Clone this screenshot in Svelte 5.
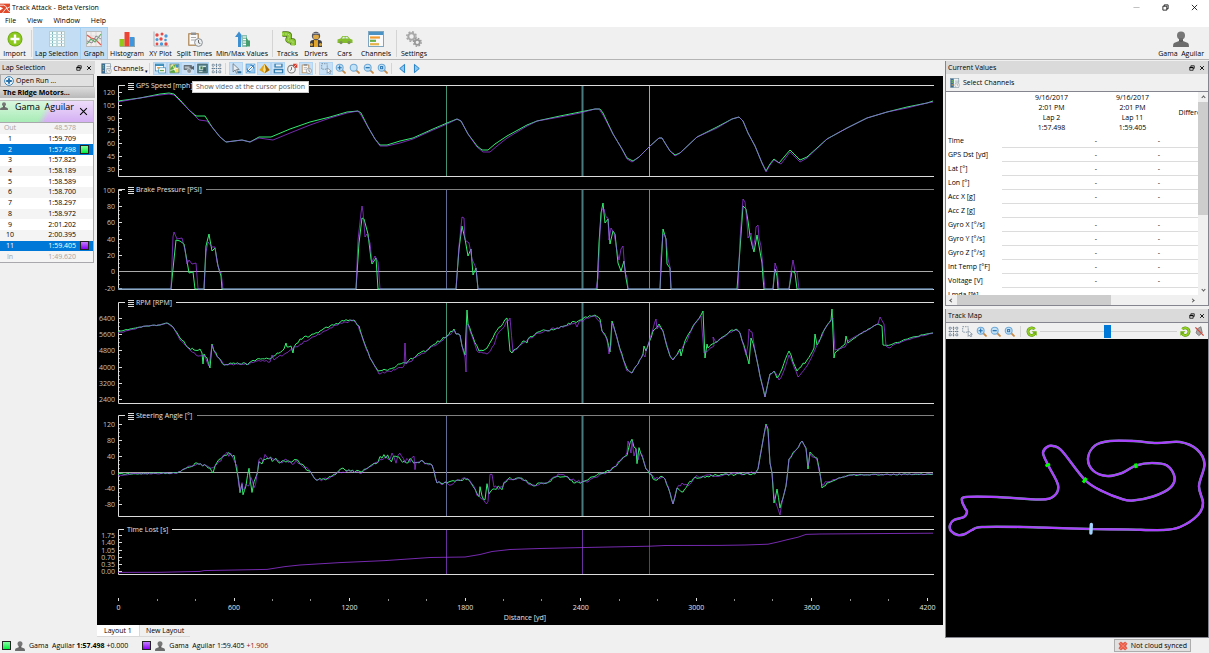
<script lang="ts">
	type Tool = { label: string; icon: string; width: number; active?: boolean; divider?: boolean };

	const tools: Tool[] = [
		{ label: 'Import', icon: 'import', width: 29 },
		{ label: 'Lap Selection', icon: 'laps', width: 48, active: true, divider: true },
		{ label: 'Graph', icon: 'graph', width: 27, active: true },
		{ label: 'Histogram', icon: 'histogram', width: 38 },
		{ label: 'XY Plot', icon: 'xy', width: 29 },
		{ label: 'Split Times', icon: 'clipboard', width: 39 },
		{ label: 'Min/Max Values', icon: 'minmax', width: 56 },
		{ label: 'Tracks', icon: 'tracks', width: 27, divider: true },
		{ label: 'Drivers', icon: 'driver', width: 30 },
		{ label: 'Cars', icon: 'car', width: 27 },
		{ label: 'Channels', icon: 'channels', width: 36 },
		{ label: 'Settings', icon: 'gears', width: 32, divider: true }
	];

	const plotTools = [
		[
			['Show table', 'window', true],
			['Show map', 'map', true],
			['Show video', 'video', true],
			['Show video at the cursor position', 'videoCursor', true],
			['Show grid', 'grid', false]
		],
		[
			['Cursor', 'pointer', true],
			['Zoom to fit', 'resize', false],
			['Show splits', 'pyramid', true],
			['Save view', 'save', true],
			['Time offset', 'stopwatch', false],
			['Notes', 'notes', true]
		],
		[
			['Select area', 'select', true],
			['Zoom in', 'zoomIn', false],
			['Zoom', 'zoom', false],
			['Zoom out', 'zoomOut', false],
			['Zoom all', 'zoomAll', false]
		],
		[
			['Previous lap', 'left', false],
			['Next lap', 'right', false]
		]
	] as [string, string, boolean][][];

	const mapTools = [
		['Grid', 'grid'],
		['Select area', 'select'],
		['Zoom in', 'zoomIn'],
		['Zoom out', 'zoomOut'],
		['Zoom all', 'zoomAll']
	];

	const laps = [
		['Out', '48.578'],
		['1', '1:59.709'],
		['2', '1:57.498'],
		['3', '1:57.825'],
		['4', '1:58.189'],
		['5', '1:58.589'],
		['6', '1:58.700'],
		['7', '1:58.297'],
		['8', '1:58.972'],
		['9', '2:01.202'],
		['10', '2:00.395'],
		['11', '1:59.405'],
		['In', '1:49.620']
	];

	let selected = $state(['2', '11']);
	let rotation = $state(49);

	const channels = [
		'Time', 'GPS Dst [yd]', 'Lat [°]', 'Lon [°]', 'Acc X [g]', 'Acc Z [g]', 'Gyro X [°/s]',
		'Gyro Y [°/s]', 'Gyro Z [°/s]', 'Int Temp [°F]', 'Voltage [V]', 'Lmda [%]'
	];

	const panels = [
		{ title: 'GPS Speed [mph]', menu: true, end: 194, top: 85, bottom: 176, first: 92.5, step: 12.8, minor: 3, labels: ['120', '105', '90', '75', '60', '45', '30'] },
		{ title: 'Brake Pressure [PSI]', menu: true, end: 206, top: 189, bottom: 289, first: 190, step: 16.35, minor: 4, labels: ['100', '80', '60', '40', '20', '0', '-20'], zero: 271 },
		{ title: 'RPM [RPM]', menu: true, end: 176, top: 302, bottom: 403, first: 318.4, step: 16.2, minor: 4, labels: ['6400', '5600', '4800', '4000', '3200', '2400'] },
		{ title: 'Steering Angle [°]', menu: true, end: 197, top: 415, bottom: 516, first: 424.6, step: 16, minor: 4, labels: ['120', '80', '40', '0', '-40', '-80'], zero: 472 },
		{ title: 'Time Lost [s]', menu: false, end: 172, top: 529, bottom: 574, first: 535.5, step: 7.25, minor: 2, labels: ['1.75', '1.40', '1.05', '0.70', '0.35', '0.00'] }
	];

	const distances = [0, 600, 1200, 1800, 2400, 3000, 3600, 4200];
	const toX = (yards: number) => 118.5 + yards * 0.1926;

	// lap 2
	const speedA = '118,101 140,98 160,94 169,93 174,94 180,100 189,110 196,116 205,116 212,127 220,137 226,142 242,140 250,142 259,137 271,137 290,129 310,122 330,117 347,112 358,111 361,113 368,127 375,139 380,145 387,145 400,141 413,138 433,129 447,123 457,119 461,121 468,134 477,146 482,150 488,150 495,144 507,136 527,125 537,121 560,116 580,112 595,109 600,109 603,113 613,134 622,149 627,158 633,161 639,157 650,146 659,138 662,138 665,143 670,151 675,155 680,153 697,137 717,127 732,119 739,117 743,121 748,133 755,146 762,163 766,171 770,164 774,159 779,163 790,150 793,153 800,160 807,157 827,139 847,128 867,118 887,112 907,107 927,103 933,101';
	const brakeA = '118,289 171,289 173,269 176,240 180,241 184,244 187,261 189,273 193,272 195,289 204,289 206,246 209,234 210,240 212,251 215,248 218,266 221,276 222,289 356,289 359,243 362,218 364,219 368,234 371,259 372,264 376,258 378,289 456,289 459,249 462,226 465,239 468,256 471,249 473,275 476,268 478,289 597,289 599,243 601,213 603,203 605,223 608,219 610,244 613,231 615,234 618,263 621,271 624,261 626,278 628,289 660,289 662,249 663,229 666,239 667,264 670,268 671,289 737,289 740,249 743,206 746,209 748,221 750,236 752,245 754,252 757,235 759,246 762,263 763,278 764,289 773,289 775,269 777,276 778,289 789,289 792,271 795,273 797,289 933,289';
	const rpmA = '118,332 130,329 147,326 160,325 167,323 173,327 180,338 189,348 194,350 200,349 202,353 203,364 204,354 207,358 210,368 212,344 214,351 219,358 224,365 230,363 245,363 247,365 257,359 270,359 277,353 284,349 286,343 287,347 291,346 293,353 294,347 300,339 314,334 330,326 344,321 354,320 359,326 363,339 370,358 378,371 386,370 393,368 400,364 405,363 420,353 429,349 430,347 447,336 454,329 456,334 460,335 462,346 465,355 467,310 468,324 473,337 479,351 487,348 495,333 507,318 510,351 512,353 523,341 527,343 528,339 538,332 557,328 580,320 595,315 600,319 602,331 607,339 610,352 612,321 615,331 620,349 627,369 632,373 638,364 643,354 644,346 646,351 653,331 659,324 663,331 665,339 670,356 673,360 680,349 681,356 685,341 693,326 701,315 703,311 705,358 707,344 708,348 720,339 730,331 736,329 740,333 746,353 749,364 751,338 755,351 760,376 765,397 770,374 774,371 777,378 782,369 789,351 797,371 807,360 814,348 815,334 817,345 826,327 831,320 832,309 834,358 835,353 845,344 846,336 848,343 860,334 878,324 882,326 883,345 890,345 913,337 933,333';
	const steerA = '118,474 177,473 184,469 197,463 210,468 213,473 215,466 225,453 234,458 237,469 240,491 242,483 243,493 246,484 249,467 252,491 256,478 259,459 262,463 267,456 274,459 284,461 300,464 310,471 316,480 327,479 337,473 343,468 347,471 362,472 374,463 382,457 397,459 410,461 423,463 432,465 434,471 437,483 447,483 457,480 468,479 475,489 479,498 480,484 482,499 485,501 487,485 489,496 491,488 500,488 508,479 520,478 532,485 547,483 558,476 568,477 575,483 588,480 600,474 610,471 620,461 627,454 632,440 636,449 637,465 639,449 646,469 655,480 663,477 665,479 670,493 673,504 677,488 683,492 688,484 695,477 727,474 755,474 758,469 762,446 766,424 768,429 770,463 772,473 774,503 777,489 780,508 783,498 786,486 789,459 795,451 802,441 806,448 808,469 810,452 817,458 819,468 822,488 827,483 837,479 850,475 933,474';

	// lap 11
	const speedB = '118,102 140,98 160,95 169,94 174,95 180,101 189,110 199,120 207,121 212,127 220,137 226,142 242,140 250,142 259,138 273,140 290,133 310,125 330,118 347,113 358,111 361,115 368,127 375,139 380,146 387,146 400,143 413,139 433,130 447,124 457,119 461,121 468,134 477,147 483,152 490,152 497,146 507,138 527,126 537,121 560,117 580,113 595,109 599,109 603,115 613,134 622,149 627,159 632,162 639,157 650,146 659,138 662,138 665,143 670,151 675,156 680,153 697,137 717,128 732,119 739,117 743,121 748,133 755,146 762,163 766,172 770,165 774,160 781,164 790,152 793,155 800,162 807,158 827,139 847,128 867,118 887,112 907,108 927,103 933,102';
	const brakeB = '118,289 171,289 172,262 173,237 174,232 177,239 182,238 185,250 187,264 189,260 192,264 196,263 198,289 204,289 206,252 208,242 212,247 215,247 217,262 220,273 221,272 223,289 356,289 358,240 361,213 362,206 363,212 365,237 367,234 370,243 372,262 375,256 378,262 380,289 456,289 459,246 462,217 464,218 465,240 469,243 472,259 476,268 478,289 596,289 598,278 600,232 602,209 604,209 606,217 608,218 609,240 611,228 614,233 617,251 619,260 621,249 623,246 625,273 627,277 628,289 660,289 661,257 663,234 664,234 666,239 668,259 670,267 671,289 738,289 740,239 743,199 745,202 747,222 748,238 751,233 753,249 755,239 756,227 758,225 759,238 761,246 763,268 765,289 773,289 775,263 777,269 779,289 789,289 791,272 793,260 795,271 797,272 799,289 933,289';
	const rpmB = '118,333 130,330 147,326 160,325 167,323 173,327 180,340 189,349 196,355 204,355 209,366 212,345 214,351 219,358 224,365 230,364 245,364 248,365 257,361 270,362 272,355 274,360 290,350 310,339 330,328 344,322 354,321 358,325 363,340 370,358 379,374 386,372 395,370 404,366 405,343 406,364 420,355 447,337 454,330 456,334 460,335 462,346 465,357 466,372 467,325 468,324 473,339 477,351 487,354 494,345 497,335 510,318 513,352 523,343 538,333 557,328 575,323 577,327 579,322 595,316 600,322 602,331 607,340 609,354 611,345 612,323 615,331 620,350 627,371 632,373 638,364 643,354 645,357 646,351 653,329 656,319 657,329 659,326 663,331 665,339 670,356 673,360 680,351 687,341 693,327 701,316 704,353 706,352 714,346 713,337 716,343 730,332 736,330 740,333 746,355 748,345 749,329 752,332 755,351 760,376 765,397 770,374 774,371 779,380 783,373 789,355 798,377 807,366 817,345 826,327 833,318 835,350 845,347 848,341 860,334 878,324 880,317 884,324 886,346 890,348 893,345 913,338 933,333';
	const steerB = '118,476 130,474 177,473 184,469 197,464 210,468 215,466 227,454 234,458 237,469 240,490 242,485 243,491 246,486 249,485 251,478 254,488 257,476 259,462 267,456 273,460 284,462 300,464 310,471 316,480 327,479 337,473 347,471 362,473 374,464 382,459 394,456 396,466 398,453 405,460 410,463 414,459 415,472 416,461 423,463 432,465 434,471 437,483 447,483 451,485 457,480 468,479 475,489 479,498 485,503 488,503 490,476 492,475 494,488 499,491 508,479 520,478 532,485 547,483 558,474 568,477 575,481 588,482 600,474 610,471 620,461 627,454 628,442 631,454 632,441 634,454 636,446 638,462 640,450 646,469 655,479 663,477 665,479 670,493 673,504 677,488 682,483 688,486 695,477 727,474 755,473 758,469 762,446 766,425 768,432 770,463 772,473 774,496 777,506 780,515 783,498 786,486 789,459 795,451 802,441 806,449 808,466 810,454 817,460 819,470 822,485 827,482 837,479 850,475 933,474';
	const lost = '118,572.4 160,572.3 200,571.4 204,570.6 267,569.4 285,566.6 300,565 340,562.6 385,560.6 430,557.5 465,557 480,554.5 492,551.5 510,549.5 540,548.5 580,547.6 650,546.2 665,545.5 720,545.4 745,545 768,544.2 778,542 788,539.5 798,537.2 806,534.4 820,534 933,533.2';

	// sensor noise: breaks long runs into small steps with a repeatable wobble
	function rough(source: string, amount: number, seed: number) {
		const pts = source.split(' ').map((p) => p.split(',').map(Number));
		let n = seed;
		const out = [pts[0].join()];
		for (let i = 1; i < pts.length; i++) {
			const [x0, y0] = pts[i - 1];
			const [x1, y1] = pts[i];
			const parts = Math.max(1, Math.round((x1 - x0) / 2));
			const size = x0 > 825 || x0 < 180 ? amount * 0.4 : amount;
			for (let k = 1; k <= parts; k++) {
				n = (n * 16807) % 2147483647;
				const wobble = k < parts ? (n / 2147483647 - 0.5) * size : 0;
				out.push(`${(x0 + ((x1 - x0) * k) / parts).toFixed(1)},${(y0 + ((y1 - y0) * k) / parts + wobble).toFixed(1)}`);
			}
		}
		return out.join(' ');
	}

	// steering is busiest where the wheel is being worked
	const busy = (source: string, seed: number) => {
		const pts = rough(source, 3, seed).split(' ');
		let n = seed * 7;
		return pts
			.map((p) => {
				const [x, y] = p.split(',').map(Number);
				n = (n * 16807) % 2147483647;
				const hot = (x > 222 && x < 300) || (x > 372 && x < 424) || (x > 476 && x < 504) || (x > 626 && x < 644);
				return `${x},${hot ? y + (n / 2147483647 - 0.5) * 6 : y}`;
			})
			.join(' ');
	};

	const traces = [
		[speedA, speedB],
		[brakeA, brakeB],
		[rough(rpmA, 2.4, 11), rough(rpmB, 2.4, 29)],
		[busy(steerA, 17), busy(steerB, 43)]
	];

	const outline = [
		[1091, 529], [1057, 528], [1023, 527], [982, 527], [972, 530], [965, 534], [958, 535], [951, 531],
		[950, 525], [954, 520], [964, 517], [967, 512], [965, 508], [962, 501], [966, 497], [997, 497],
		[1040, 499.5], [1054, 496], [1058, 485], [1048, 465], [1043, 453], [1047, 447], [1053, 446],
		[1062, 451], [1085, 480], [1103, 491.5], [1122, 499], [1133, 500.5], [1153, 496.5], [1170, 488],
		[1174.5, 477], [1167, 465.5], [1152, 463], [1136, 465.5], [1122, 473], [1107, 476], [1093, 470.5],
		[1088, 458], [1095, 445.5], [1110, 441], [1133, 441], [1157, 443], [1180, 442], [1197, 449.5],
		[1204.5, 464], [1199, 486], [1203, 503], [1198, 515], [1180, 527], [1163, 530], [1128, 529.5]
	];

	function closedCurve(p: number[][]) {
		const at = (i: number) => p[(i + p.length) % p.length];
		let d = `M${at(0)}`;
		for (let i = 0; i < p.length; i++) {
			const [a, b, c, e] = [at(i - 1), at(i), at(i + 1), at(i + 2)];
			d += `C${b[0] + (c[0] - a[0]) / 6} ${b[1] + (c[1] - a[1]) / 6} ${c[0] - (e[0] - b[0]) / 6} ${c[1] - (e[1] - b[1]) / 6} ${c[0]} ${c[1]}`;
		}
		return d;
	}

	const track = closedCurve(outline);
</script>

{#snippet lens()}
	<path d="M10 10l4.5 4.5" stroke="#c98a45" stroke-width="2.6" stroke-linecap="round" />
	<circle cx="6.8" cy="6.8" r="5" fill="#c4e2f6" stroke="#6fa9d6" stroke-width="1.6" />
{/snippet}

{#snippet icon(name: string)}
	<svg class="icon" viewBox="0 0 16 16" fill="none" aria-hidden="true">
		{#if name === 'logo'}
			<rect y="1" width="16" height="15" fill="#e2492b" />
			<path d="M0 3.5h6q4 1 5 5t5 5.500M4 16q3-7 12-10" stroke="#fff" stroke-width="1.3" />
			<path d="M0 12l5-3.500L0 6z" fill="#fff" />
		{:else if name === 'import'}
			<circle cx="8" cy="8" r="7.5" fill="#6fa81a" />
			<circle cx="8" cy="8" r="6.6" fill="#8cc91c" />
			<path d="M8 3.5v9M3.5 8h9" stroke="#fff" stroke-width="2.4" />
		{:else if name === 'laps'}
			<rect x=".5" y=".5" width="15" height="15" fill="#f5fafa" stroke="#b9cdd0" />
			<path d="M1 3.5h14M1 6.5h14M1 9.5h14M1 12.5h14" stroke="#b5d3da" stroke-width=".8" />
			<path d="M3.5 1v14M8 1v14M12.5 1v14" stroke="#7db9bb" stroke-dasharray="2 1" />
		{:else if name === 'graph'}
			<rect x=".5" y=".5" width="15" height="15" fill="#f2eeee" stroke="#bbb" />
			<path d="M1 5h14M1 9h14M5 1v14M10 1v14" stroke="#d4cfcf" stroke-width=".7" />
			<path d="M1 4l4 3 4 1 6 6" stroke="#df5b50" stroke-width="1.2" />
			<path d="M1 13l4-5 4 3 6-8" stroke="#60ae66" stroke-width="1.2" />
			<path d="M1 10l5 2 4-7 5 3" stroke="#8c8791" />
		{:else if name === 'histogram'}
			<path d="M.5 8h5v7.5h-5z" fill="#90c81c" />
			<path d="M5.5 1h5v14.5h-5z" fill="#ec4534" />
			<path d="M10.5 6h5v9.5h-5z" fill="#3d96de" />
			<path d="M1 16h15V7" stroke="#7c8c88" />
		{:else if name === 'xy'}
			<path d="M1 .5V15h15" stroke="#a9b7bd" />
			<g fill="#ea4a45"><circle cx="4" cy="4" r="1.7" /><circle cx="9" cy="3" r="1.5" /><circle cx="8" cy="8" r="1.7" /><circle cx="13" cy="13" r="1.7" /><circle cx="4" cy="13" r="1.4" /></g>
			<g fill="#4b9adb"><circle cx="13" cy="5" r="1.7" /><circle cx="4" cy="8.5" r="1.5" /><circle cx="8.5" cy="13" r="1.7" /><circle cx="12.5" cy="9" r="1.3" /></g>
		{:else if name === 'clipboard' || name === 'notes'}
			<rect x="1" y="2" width="11" height="13" rx="1" fill="#b9986f" />
			<rect x="2.5" y="3.5" width="8" height="10" fill="#fafafa" />
			<path d="M4 1.5h5v2.5H4z" fill="#8f9396" />
			<path d="M4 6.5h5M4 9h4" stroke="#a8a8a8" />
			<circle cx="11.5" cy="11.5" r="3.9" fill="#eceff1" stroke="#8b8f92" />
			<path d="M11.5 9v2.8l1.8.7" stroke="#666" />
		{:else if name === 'minmax'}
			<path d="M4 16V6H1l4-5.500L9 6H7v10z" fill="#3c8fd0" />
			<path d="M7 4h6v12H8z" fill="#8cc0b2" />
			<path d="M9 6h3M9 8.5h5M9 11h5M9 13.5h5" stroke="#fff" />
			<path d="M12 6l2.5 3.5H16v6h-4z" fill="#479e6d" />
		{:else if name === 'tracks'}
			<path d="M2.500 3h4c4 0 3 3 2 4.500s0 2.500 2 2.500h2.500v4" stroke="#496b18" stroke-width="5.400" stroke-linejoin="round" />
			<path d="M2 3h4.500c4 0 3 3 2 4.500s0 2.500 2 2.500h2.500v4.500" stroke="#86c52d" stroke-width="4.200" stroke-linejoin="round" />
			<path d="M2 3h4.500c4 0 3 3 2 4.500s0 2.500 2 2.500h2.500v4.500" stroke="#d8ecb8" stroke-width=".7" stroke-dasharray="2 1" />
		{:else if name === 'driver'}
			<path d="M2 16V12q0-3 3-3h6q3 0 3 3v4z" fill="#3c3c42" />
			<path d="M6 9h4v7H6z" fill="#e0a52a" />
			<circle cx="8" cy="5" r="4.2" fill="#54545c" />
			<path d="M5 4.5q3-1.500 6 0l-.5 3.5h-5z" fill="#dfaa45" />
			<path d="M5 2.5h6" stroke="#9ba0a8" stroke-width="1.2" />
			<circle cx="3.5" cy="13.5" r="1.5" fill="#d4a33c" /><circle cx="12.5" cy="13.5" r="1.5" fill="#d4a33c" />
		{:else if name === 'car'}
			<path d="M.5 8.500l3-1L5.500 5h5l2.500 2.800 2.500 1V12H.5z" fill="#84bd2c" />
			<path d="M4.800 7.500L6.200 5.800h1.500v1.700zM8.500 5.800H10l1.700 1.700H8.500z" fill="#e5f0f6" />
			<circle cx="4" cy="11.600" r="1.600" fill="#7c8f5c" /><circle cx="12" cy="11.600" r="1.600" fill="#7c8f5c" />
		{:else if name === 'channels'}
			<rect x=".5" y=".5" width="15" height="15" fill="#f8fafb" stroke="#7fa6c0" />
			<path d="M1 2.5h14" stroke="#4a92c4" stroke-width="3" />
			<path d="M2 6.5h10" stroke="#f19a2e" stroke-width="2.2" />
			<path d="M2 9.8h6" stroke="#67b04a" stroke-width="2.2" />
			<path d="M2 13.2h9" stroke="#e4b34c" stroke-width="2.2" />
		{:else if name === 'gears'}
			<circle cx="5.5" cy="5.5" r="3.2" stroke="#a8a8a8" stroke-width="2" />
			<circle cx="5.5" cy="5.5" r="4.7" stroke="#a8a8a8" stroke-width="1.6" stroke-dasharray="1.9 1.8" />
			<circle cx="11.3" cy="11.3" r="2.5" stroke="#989898" stroke-width="1.8" />
			<circle cx="11.3" cy="11.3" r="3.9" stroke="#989898" stroke-width="1.4" stroke-dasharray="1.6 1.46" />
		{:else if name === 'user'}
			<circle cx="8" cy="4.5" r="4" fill="#777" />
			<path d="M6 7h4v3l5 2q1 .5 1 4H0q0-3.500 1-4l5-2z" fill="#6c6c6c" />
			<path d="M6 9.5q2 1.500 4 0" stroke="#505050" />
		{:else if name === 'list'}
			<rect x="1" y="1" width="13" height="14" fill="#eef3f5" stroke="#7d96a5" />
			<path d="M1 1h5v14H1z" fill="#3b6c94" />
			<path d="M2.5 4h2M2.5 7h2" stroke="#7ec24f" stroke-width="2" /><path d="M2.5 11h2" stroke="#f0a63a" stroke-width="2" />
			<path d="M8 5h7M8 8h5" stroke="#8f9fa8" />
			<circle cx="11.5" cy="11.5" r="3.7" fill="#f4f4f4" stroke="#9fa6aa" />
			<path d="M11.5 9.5v2h2" stroke="#8a8f92" />
		{:else if name === 'window'}
			<rect x=".5" y="1.5" width="12" height="10" fill="#fff" stroke="#2d86b5" />
			<path d="M0 3h13" stroke="#2d86b5" stroke-width="2.5" />
			<rect x="5.5" y="7" width="10" height="7.5" fill="#fff" stroke="#2d86b5" />
			<path d="M3 7h4" stroke="#ef9a2c" stroke-width="2" /><path d="M7 11h6" stroke="#6aa84f" stroke-width="2" />
		{:else if name === 'map'}
			<rect x="1.5" y="1.5" width="13" height="13" fill="#f7df61" stroke="#3c7ba0" />
			<path d="M2 8l4-5h3l-2 6 4 5H2z" fill="#56a844" /><path d="M9 2h5v6l-4-2z" fill="#3f8fca" />
			<path d="M5 2l5 12M2 11l12-4" stroke="#fff" />
		{:else if name === 'video'}
			<rect x="1" y="3" width="12" height="7" rx="1" fill="#667078" />
			<path d="M2.5 5h7v3h-7z" fill="#b4bec4" /><path d="M12 6l4-2v6l-4-2z" fill="#566068" />
			<circle cx="9" cy="11.5" r="3.5" fill="#8a949b" stroke="#fff" stroke-width=".7" />
		{:else if name === 'videoCursor'}
			<rect x="1" y="1.5" width="14" height="13" fill="#55818a" stroke="#3b5a62" />
			<path d="M3 4h10v6H3z" fill="#d3e4e0" /><path d="M5 5h3v4H5z" fill="#3f8550" /><path d="M9 6h4v6H9z" fill="#3b5a62" />
			<path d="M3 12.5h5" stroke="#fff" />
		{:else if name === 'grid'}
			<path d="M1 3h14M1 8h14M1 13h14M3 1v14M8 1v14M13 1v14" stroke="#60798f" stroke-width="1.4" stroke-dasharray="2 1" />
		{:else if name === 'pointer'}
			<path d="M3 1v12l3-3 2 5 2-1-2-4.500h4z" fill="#e9eef2" stroke="#57656f" />
			<path d="M10 12h5v3h-5z" fill="#2f6f9d" />
		{:else if name === 'resize'}
			<rect x="1.5" y="1.5" width="13" height="13" fill="#9ac9ee" stroke="#4d9bd6" />
			<path d="M3 13L13 3" stroke="#fff" stroke-width="4" /><path d="M4 12l8-8M8 3.500h4.500V8M3.500 8v4.500H8" stroke="#2473b5" stroke-width="1.3" />
		{:else if name === 'pyramid'}
			<path d="M8 1l7.5 9L8 15 .5 10z" fill="#e3a51c" /><path d="M8 1l7.5 9L8 15z" fill="#a56b08" /><path d="M8 1l2 9-2 5-2-5z" fill="#ffe384" />
		{:else if name === 'save'}
			<path d="M2 1h12v6H2z" fill="#377eb2" /><path d="M4 2h8v3H4z" fill="#eaf4fa" />
			<path d="M1 8h14v7H1z" fill="#337cb0" /><path d="M3 10.5h10v3H3z" fill="#d9ebf6" /><path d="M0 7.5h16" stroke="#fff" />
		{:else if name === 'stopwatch'}
			<circle cx="6.5" cy="9" r="5.5" fill="#f4f4f4" stroke="#7c7c7c" stroke-width="1.6" />
			<path d="M6.5 6v3.5l-2 1.5" stroke="#333" />
			<path d="M9 1h6v6h-2L9 6z" fill="#d93c2b" /><path d="M10 6l4-4" stroke="#fff" />
		{:else if name === 'select'}
			<path d="M1 1h8v8H1z" stroke="#73879a" stroke-width="1.3" stroke-dasharray="2 1.5" />
			<path d="M9 7v8l2-2 1.5 3 1.5-1-1.500-3H15z" fill="#fff" stroke="#68798a" />
		{:else if name === 'zoom'}
			{@render lens()}
		{:else if name === 'zoomIn'}
			{@render lens()}
			<path d="M6.800 3.800v6M3.800 6.800h6" stroke="#2571b0" stroke-width="1.6" />
		{:else if name === 'zoomOut'}
			{@render lens()}
			<path d="M3.800 6.800h6" stroke="#2571b0" stroke-width="1.8" />
		{:else if name === 'zoomAll'}
			{@render lens()}
			<path d="M4.5 4.5h4.5v4.5H4.5z" fill="#2571b0" /><path d="M6 6h1.5v1.5H6z" fill="#fff" />
		{:else if name === 'left'}
			<path d="M11 2v12L4 8z" fill="#8dc8f2" stroke="#1c7cc4" stroke-width="1.4" />
		{:else if name === 'right'}
			<path d="M5 2v12l7-6z" fill="#8dc8f2" stroke="#1c7cc4" stroke-width="1.4" />
		{:else if name === 'open'}
			<circle cx="8" cy="8" r="7" fill="#eef6fc" stroke="#3a80b4" stroke-width="1.6" />
			<path d="M8 3.5v9M3.5 8h9" stroke="#286fa8" stroke-width="3" />
		{:else if name === 'ccw' || name === 'cw'}
			<g class:flip={name === 'cw'}>
				<path d="M12.5 4.5A5.500 5.500 0 1 0 13 11" stroke="#4d8a08" stroke-width="4" />
				<path d="M12.5 4.5A5.500 5.500 0 1 0 13 11" stroke="#93cf22" stroke-width="2.6" />
				<path d="M8 7.5h7.5V14z" fill="#6eb010" />
			</g>
		{:else if name === 'mute'}
			<path d="M5 4l5-3 2 9-5 4-4-4z" fill="#a5a5a5" stroke="#666" />
			<path d="M2 2l12 12" stroke="#d34a3c" stroke-width="2" />
		{:else if name === 'failed'}
			<path d="M4.5 1.5L8 4l3.5-2.500 3 3L12 8l2.5 3.5-3 3L8 12l-3.500 2.500-3-3L4 8 1.500 4.500z" fill="#ee5f49" stroke="#d8402c" />
			<path d="M3 3l10 10M13 3L3 13" stroke="#f69c8c" stroke-width="1.2" stroke-dasharray="1.5 1" />
		{:else if name === 'close'}
			<path d="M3 3l10 10M13 3L3 13" stroke="currentColor" stroke-width="2.4" />
		{:else if name === 'thin-close'}
			<path d="M2 2l12 12M14 2L2 14" stroke="currentColor" stroke-width="1.8" />
		{:else if name === 'float'}
			<path d="M5 5V2h9v7h-3" stroke="currentColor" stroke-width="2" /><path d="M2 6h9v8H2z" stroke="currentColor" stroke-width="2" />
			<path d="M2 7h9" stroke="currentColor" stroke-width="3" />
		{:else if name === 'restore'}
			<path d="M5 5V2h9v9h-3M2 5h9v9H2z" stroke="currentColor" stroke-width="1.8" />
		{:else if name === 'minimise'}
			<path d="M1 8h14" stroke="#999" stroke-width="1.4" />
		{/if}
	</svg>
{/snippet}

{#snippet dockTitle(title: string)}
	<header class="dock-title">
		<h2>{title}</h2>
		<button aria-label="Float {title}">{@render icon('float')}</button>
		<button aria-label="Close {title}">{@render icon('close')}</button>
	</header>
{/snippet}

<div class="window">
	<header class="titlebar">
		{@render icon('logo')}
		<h1>Track Attack - Beta Version</h1>
		<button aria-label="Minimise">{@render icon('minimise')}</button>
		<button aria-label="Restore">{@render icon('restore')}</button>
		<button aria-label="Close">{@render icon('thin-close')}</button>
	</header>

	<nav class="menu">
		{#each ['File', 'View', 'Window', 'Help'] as item}
			<button>{item}</button>
		{/each}
	</nav>

	<div class="toolbar">
		{#each tools as tool}
			{#if tool.divider}<span class="divider"></span>{/if}
			<button class:active={tool.active} style:width="{tool.width}px">
				{@render icon(tool.icon)}
				<span>{tool.label}</span>
			</button>
		{/each}
		<button class="account">
			{@render icon('user')}
			<span>Gama  Aguilar</span>
		</button>
	</div>

	<main>
		<aside class="laps">
			{@render dockTitle('Lap Selection')}
			<button class="open-run">{@render icon('open')}Open Run ...</button>
			<h3>The Ridge Motors...</h3>
			<div class="run">
				{@render icon('user')}
				<div>
					<strong>Gama  Aguilar</strong>
					<time datetime="2017-09-16T14:01">9/16/2017 2:01 PM</time>
				</div>
				<button aria-label="Close run">{@render icon('thin-close')}</button>
			</div>
			<table class="lap-table">
				<tbody>
					{#each laps as [lap, time]}
						<tr class:selected={selected.includes(lap)} class:muted={lap === 'Out' || lap === 'In'} class:best={lap === '2'}>
							<td class="lap">{lap}</td>
							<td class="time">{time}</td>
							<td class="key">
								{#if selected.includes(lap)}<i class="swatch" class:violet={lap === '11'}></i>{/if}
							</td>
						</tr>
					{/each}
				</tbody>
			</table>
		</aside>

		<section class="graph">
			<div class="plot-toolbar">
				<button class="pick">{@render icon('list')}Channels<small>▾</small></button>
				{#each plotTools as group}
					<span class="divider"></span>
					{#each group as [label, glyph, on]}
						<button class:on aria-label={label}>{@render icon(glyph)}</button>
					{/each}
				{/each}
			</div>

			<div class="plot">
				<svg class="charts" viewBox="97 76 846 549" role="img" aria-label="Lap channel graphs">
					{#each panels as panel, i}
						{@const left = panel.menu ? 125 : 124}
						<g class="axis">
							<path d="M{left} {panel.top + 0.5}H118.500V{panel.bottom + 0.5}H934" />
							<path class:dim={i % 2 === 1} d="M{panel.end} {panel.top + 0.5}H934" />
							{#each panel.labels as label, k}
								{@const y = panel.first + k * panel.step}
								<path d="M119 {Math.floor(y) + 0.5}h3" />
								{#if k < panel.labels.length - 1}
									{#each Array(panel.minor - 1) as _, m}
										<path class="minor" d="M119 {Math.floor(y + ((m + 1) * panel.step) / panel.minor) + 0.5}h1" />
									{/each}
								{/if}
								<text class="value" x="115" y={y + 2.5}>{label}</text>
							{/each}
							{#if panel.zero}
								<path class="zero" d="M119 {panel.zero + 0.5}H933" />
							{/if}
							{#if panel.menu}
								<path class="handle" d="M128 {panel.top - 1.5}h6m-6 2h6m-6 2h6m-6 2h6" />
							{/if}
							<text x={panel.menu ? 136 : 127} y={panel.top + 3}>{panel.title}</text>
						</g>
						<g class={['cursors', i % 2 ? 'cool' : 'warm', i === 4 && 'violet-only']}>
							<path d="M446.500 {panel.top + 1}V{panel.bottom}" />
							<path class="twin" d="M582.500 {panel.top + 1}V{panel.bottom}" />
							<path class="main" d="M649.500 {panel.top + 1}V{panel.bottom}" />
						</g>
						{#if traces[i]}
							<polyline class="lap-a" points={traces[i][0]} />
							<polyline class="lap-b" points={traces[i][1]} />
						{/if}
					{/each}
					<polyline class="lap-b" points={lost} />

					<g class="axis">
						{#each distances as yards}
							<path d="M{Math.floor(toX(yards)) + 0.5} 598v3" />
							{#if yards < 4200}
								<path class="minor" d="M{Math.floor(toX(yards + 200)) + 0.5} 599v2m38-2v2" />
							{/if}
							<text class="middle" x={toX(yards)} y="610">{yards}</text>
						{/each}
						<text class="middle" x="525" y="620">Distance [yd]</text>
					</g>
				</svg>
				<div class="tooltip" role="tooltip">Show video at the cursor position</div>
			</div>

			<div class="tabs">
				<button class="current">Layout 1</button>
				<button>New Layout</button>
			</div>
		</section>

		<aside class="right">
			<section class="values">
				{@render dockTitle('Current Values')}
				<button class="choose">{@render icon('list')}Select Channels</button>
				<div class="scroller">
					<div class="viewport">
						<table>
							<thead>
								<tr>
									<th></th>
									<th>9/16/2017<br />2:01 PM<br />Lap 2<br />1:57.498</th>
									<th>9/16/2017<br />2:01 PM<br />Lap 11<br />1:59.405</th>
									<th>Difference</th>
								</tr>
							</thead>
							<tbody>
								{#each channels as channel}
									<tr>
										<th scope="row">{channel}</th>
										<td>{channel === 'Acc Z [g]' ? '' : '-'}</td>
										<td>{channel === 'Acc Z [g]' ? '' : '-'}</td>
										<td></td>
									</tr>
								{/each}
							</tbody>
						</table>
					</div>
					<div class="bar vertical"><i></i></div>
					<div class="bar horizontal"><i></i></div>
				</div>
			</section>

			<section class="map">
				{@render dockTitle('Track Map')}
				<div class="map-toolbar">
					{#each mapTools as [label, glyph]}
						<button aria-label={label}>{@render icon(glyph)}</button>
					{/each}
					<span class="divider"></span>
					<button aria-label="Rotate left">{@render icon('ccw')}</button>
					<input type="range" aria-label="Map rotation" bind:value={rotation} />
					<button aria-label="Rotate right">{@render icon('cw')}</button>
					<button aria-label="Reset rotation">{@render icon('mute')}</button>
				</div>
				<div class="canvas">
					<svg viewBox="946 339 262 298" role="img" aria-label="Track outline">
						<path class="track-a" d={track} />
						<path class="track-b" d={track} />
						<path class="split" d="M1045.500 466l4.500-2M1083 482.500l3.500-4.500M1135.500 463.500l.8 4.500" />
						<path class="finish" d="M1091.300 524.500l-.4 8.500" />
					</svg>
				</div>
			</section>
		</aside>
	</main>

	<footer>
		<i class="swatch"></i>
		{@render icon('user')}
		<span>Gama  Aguilar <b>1:57.498</b> +0.000</span>
		<i class="swatch violet"></i>
		{@render icon('user')}
		<span>Gama  Aguilar 1:59.405 <em>+1.906</em></span>
		<button class="sync">{@render icon('failed')}Not cloud synced</button>
	</footer>
</div>

<style>
	:global(body) {
		margin: 0;
	}

	.window {
		--line: #a9a9ad;
		display: flex;
		flex-direction: column;
		height: 100vh;
		overflow: hidden;
		background: #f0f0f0;
		color: #000;
		font: 7px/10px 'Open Sans', 'Noto Sans', sans-serif;
	}

	button {
		display: flex;
		align-items: center;
		justify-content: center;
		box-sizing: border-box;
		margin: 0;
		padding: 0;
		border: 0;
		background: none;
		color: inherit;
		font: inherit;
		white-space: pre;
	}

	h1,
	h2,
	h3 {
		margin: 0;
		font: inherit;
	}

	table {
		border-spacing: 0;
	}

	td,
	th {
		padding: 0;
		font-weight: normal;
	}

	.icon {
		display: block;
		flex: none;
		width: 10px;
		height: 10px;
	}

	.flip {
		transform: translateX(16px) scaleX(-1);
	}

	.divider {
		flex: none;
		width: 1px;
		background: #d4d4d4;
	}

	.titlebar {
		display: flex;
		align-items: center;
		height: 15px;
		background: #fff;

		& h1 {
			flex: 1;
			margin-left: 2px;
		}

		& button {
			width: 29px;
			height: 15px;
		}

		& button .icon {
			width: 7px;
			height: 7px;
		}
	}

	.menu {
		display: flex;
		gap: 11px;
		height: 12px;
		padding-left: 5px;
		background: #fff;
	}

	.toolbar {
		display: flex;
		align-items: stretch;
		height: 32px;
		border-bottom: 1px solid #b4b4b4;

		& button {
			flex-direction: column;
			gap: 2px;
			padding-top: 3px;
		}

		& .icon {
			width: 16px;
			height: 16px;
		}

		& .divider {
			margin: 3px 1px 2px 2px;
		}

		& .active {
			background: #c3def4;
			border: 1px solid #a5d0f2;
			border-width: 1px 1px 0 0;
		}

		& .account {
			margin-left: auto;
			padding-right: 5px;
		}
	}

	main {
		display: grid;
		grid-template-columns: 95px 1fr 264px;
		gap: 2px;
		flex: 1;
		min-height: 0;
		padding-top: 1px;
	}

	.dock-title {
		display: flex;
		align-items: center;
		gap: 4px;
		height: 13px;
		padding: 0 3px 0 2px;
		background: #dadada;

		& h2 {
			flex: 1;
		}

		& .icon {
			width: 6px;
			height: 6px;
		}
	}

	/* lap list */
	.laps {
		display: flex;
		flex-direction: column;

		& h3 {
			height: 11px;
			margin-bottom: 2px;
			padding-left: 3px;
			background: linear-gradient(#dcdcdc, #b9b9b9);
			font-weight: bold;
			line-height: 11px;
		}
	}

	.open-run {
		justify-content: flex-start;
		gap: 2px;
		height: 13px;
		margin-right: 1px;
		padding-left: 3px;
		border: 1px solid #adadad;
		background: #e1e1e1;
	}

	.run {
		display: flex;
		align-items: flex-start;
		height: 21px;
		margin-right: 1px;
		border: 1px solid #bdbdbd;
		border-width: 1px 1px 0 0;
		background: linear-gradient(#ffffff90, #ffffff00), linear-gradient(118deg, #a8ecb6 0 46%, #d5b0f3 54%);

		& > .icon {
			width: 8px;
			margin-right: -4px;
		}

		& > div {
			flex: 1;
			white-space: pre;
		}

		& strong,
		& time {
			display: block;
		}

		& strong {
			padding-left: 11px;
			font-size: 9px;
			font-weight: normal;
			line-height: 11px;
		}

		& time {
			font-size: 6px;
			line-height: 8px;
		}

		& button {
			align-self: center;
			padding-right: 5px;
		}

		& button .icon {
			width: 9px;
			height: 9px;
		}
	}

	.lap-table {
		box-sizing: border-box;
		width: 94px;
		height: 141px;
		border: 1px solid var(--line);
		border-width: 1px 1px 1px 0;
		background: #fff;
		line-height: 10px;

		& tr:nth-child(even) {
			background: #fff;
		}

		& tr:nth-child(odd) {
			background: #f4f4f4;
		}

		& tr.selected {
			background: #0078d7;
			color: #fff;
		}

		& .muted {
			color: #a5a5a5;
		}

		& .best {
			font-weight: bold;
		}

		& .lap {
			width: 20px;
			text-align: center;
		}

		& .time {
			text-align: right;
		}

		& .key {
			width: 17px;
		}

		& .swatch {
			margin-left: 4px;
		}
	}

	.swatch {
		display: block;
		box-sizing: border-box;
		flex: none;
		width: 9px;
		height: 9px;
		border: 1px solid #222;
		background: linear-gradient(#86ffa2, #00f03c);

		&.violet {
			background: linear-gradient(#c27bff, #8a00f5);
		}
	}

	/* graphs */
	.graph {
		display: flex;
		flex-direction: column;
		min-width: 0;
	}

	.plot-toolbar {
		display: flex;
		align-items: center;
		height: 15px;
		padding-left: 5px;

		& .icon {
			width: 11px;
			height: 11px;
		}

		& button {
			width: 14px;
			height: 13px;
		}

		& .pick {
			gap: 1px;
			width: 45px;
		}

		& small {
			align-self: flex-end;
			font-size: 5px;
			line-height: 7px;
		}

		& .divider {
			height: 11px;
			margin: 0 3px 0 2px;
		}

		& .on {
			background: #c7e0f5;
			box-shadow: inset 0 0 0 1px #b1d5f2;
		}
	}

	.plot {
		position: relative;
		flex: 1;
		min-height: 0;
		background: #000;
	}

	.charts {
		display: block;
		width: 100%;
		height: 100%;
		fill: none;

		& text {
			fill: #e4e4e4;
			font-size: 7px;
		}

		& .value {
			fill: #c4c4c4;
			text-anchor: end;
		}

		& .middle {
			text-anchor: middle;
		}
	}

	.axis path {
		stroke: #dcdcdc;

		&.dim {
			stroke: #808080;
		}

		&.minor {
			stroke: #8c8c8c;
		}

		&.zero {
			stroke: #aaa;
		}
	}

	.lap-a {
		stroke: #34ee70;
		stroke-width: 1;
	}

	.lap-b {
		stroke: #a63cf8;
		stroke-width: 1;
		stroke-opacity: 0.7;
	}

	.warm path {
		stroke: #439275;
	}

	.cool path {
		stroke: #5f6d97;
	}

	.cursors .twin {
		stroke: #487a80;
		stroke-width: 2;
	}

	.warm .main {
		stroke: #59cf94;
	}

	.cool .main {
		stroke: #8273c0;
	}

	.violet-only path,
	.violet-only .twin,
	.violet-only .main {
		stroke: #67309a;
		stroke-width: 1;
	}

	.tooltip {
		position: absolute;
		top: 5px;
		left: 95px;
		padding: 0 3px;
		border: 1px solid #ccc;
		background: #fff;
		color: #575757;
		white-space: nowrap;
	}

	.tabs {
		display: flex;
		align-items: flex-start;
		height: 13px;

		& button {
			height: 12px;
			padding: 0 6px;
			border-bottom: 1px solid #d9d9d9;
		}

		& .current {
			padding: 0 7px;
			border-right: 1px solid #d9d9d9;
			background: #fff;
		}
	}

	/* right docks */
	.right {
		display: flex;
		flex-direction: column;
		gap: 3px;
		min-width: 0;
	}

	.values,
	.map {
		border: 1px solid #85858f;
		border-width: 0 1px 1px 1px;
	}

	.choose {
		justify-content: flex-start;
		gap: 3px;
		width: 100%;
		height: 18px;
		padding-left: 4px;
		border-bottom: 1px solid #85858f;
	}

	.scroller {
		display: grid;
		grid-template-columns: 1fr 10px;
		grid-template-rows: 203px 10px;
		background: #f0f0f0;
	}

	.viewport {
		overflow: hidden;
		background: #fff;

		& table {
			width: 281px;
			table-layout: fixed;
		}

		& thead th {
			height: 42px;
			text-align: center;
		}

		& thead th:nth-child(1) {
			width: 56px;
		}

		& thead th:nth-child(2) {
			width: 99px;
		}

		& thead th:nth-child(3) {
			width: 63px;
		}

		& tbody th {
			height: 14px;
			padding-left: 2px;
			text-align: left;
			white-space: nowrap;
		}

		& td {
			padding-right: 4px;
			border-bottom: 1px solid #dcdcdc;
			text-align: right;
		}
	}

	.bar {
		display: flex;
		align-items: center;
		justify-content: space-between;

		&::before,
		&::after {
			flex: none;
			width: 3px;
			height: 3px;
			border: 1px solid #555;
			border-width: 1px 0 0 1px;
			box-sizing: border-box;
			content: '';
		}

		& i {
			background: #cdcdcd;
		}
	}

	.vertical {
		flex-direction: column;
		padding: 4px 0;

		& i {
			width: 100%;
			height: 58%;
			margin: 3px 0 auto;
		}

		&::before {
			transform: rotate(45deg);
		}

		&::after {
			transform: rotate(225deg);
		}
	}

	.horizontal {
		padding: 0 4px;

		& i {
			width: 63%;
			height: 100%;
			margin: 0 auto 0 4px;
		}

		&::before {
			transform: rotate(-45deg);
		}

		&::after {
			transform: rotate(135deg);
		}
	}

	.map {
		display: flex;
		flex: 1;
		flex-direction: column;
		min-height: 0;
	}

	.map-toolbar {
		display: flex;
		align-items: center;
		gap: 3px;
		height: 16px;
		padding: 0 3px 0 2px;
		border-top: 1px solid #85858f;

		& .icon {
			width: 11px;
			height: 11px;
		}

		& .divider {
			height: 11px;
			margin: 0 2px;
		}

		& input {
			flex: 1;
			min-width: 0;
			height: 12px;
			margin: 0;
			appearance: none;
			background: linear-gradient(#d0d0d0, #d0d0d0) center / 100% 1px no-repeat;
		}

		& input::-webkit-slider-thumb {
			width: 7px;
			height: 13px;
			appearance: none;
			background: #0078d7;
		}
	}

	.canvas {
		flex: 1;
		min-height: 0;
		background: #000;

		& svg {
			display: block;
			width: 100%;
			height: 100%;
			fill: none;
		}
	}

	.track-a {
		stroke: #57b37c;
		stroke-width: 2.4;
	}

	.track-b {
		stroke: #ac40ff;
		stroke-width: 2.2;
	}

	.split {
		stroke: #0f0;
		stroke-width: 3;
	}

	.finish {
		stroke: #a4d3ff;
		stroke-width: 3.4;
		stroke-linecap: round;
	}

	footer {
		display: flex;
		align-items: center;
		gap: 4px;
		height: 15px;
		padding: 0 18px 0 2px;
		white-space: pre;

		& em {
			color: #8c1010;
			font-style: normal;
		}

		& .violet {
			margin-left: 10px;
		}
	}

	.sync {
		gap: 3px;
		height: 13px;
		margin-left: auto;
		padding: 0 3px;
		border: 1px solid #adadad;
		background: #e1e1e1;
	}
</style>
